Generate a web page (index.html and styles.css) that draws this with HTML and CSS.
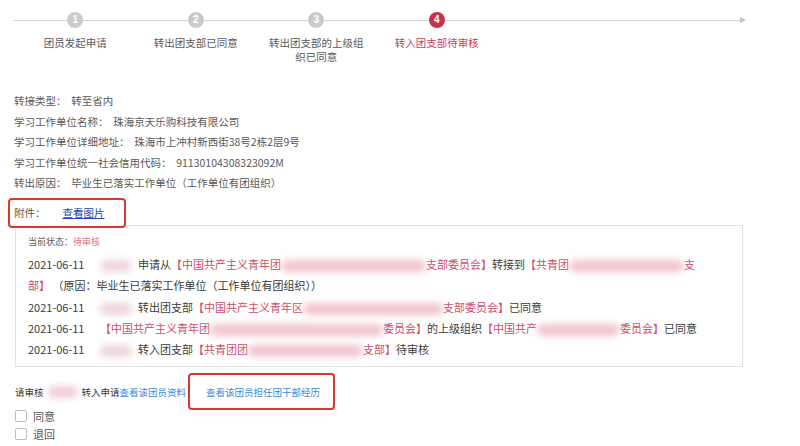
FILE: index.html
```html
<!DOCTYPE html>
<html lang="zh-CN">
<head>
    <meta charset="UTF-8">
    <meta name="viewport" content="width=device-width, initial-scale=1.0">
    <title>转接审核</title>
    <link rel="stylesheet" href="styles.css">
</head>
<body>
    <div class="steps">
        <div class="step"><span class="dot">1</span><span class="label">团员发起申请</span></div>
        <div class="step"><span class="dot">2</span><span class="label">转出团支部已同意</span></div>
        <div class="step"><span class="dot">3</span><span class="label">转出团支部的上级组织已同意</span></div>
        <div class="step current"><span class="dot">4</span><span class="label">转入团支部待审核</span></div>
    </div>

    <div class="info">
        <p>转接类型：&nbsp; 转至省内</p>
        <p>学习工作单位名称：&nbsp; 珠海京天乐购科技有限公司</p>
        <p>学习工作单位详细地址：&nbsp; 珠海市上冲村新西街38号2栋2层9号</p>
        <p>学习工作单位统一社会信用代码：&nbsp; 91130104308323092M</p>
        <p>转出原因：&nbsp; 毕业生已落实工作单位（工作单位有团组织）</p>
    </div>

    <div class="attach">附件：<a href="#">查看图片</a></div>

    <div class="record">
        <div class="state">当前状态：<span class="red">待审核</span></div>
        <div class="row">
            <span class="date">2021-06-11</span><span class="blur name"></span>申请从<span class="red">【中国共产主义青年团</span><span class="blur w145"></span><span class="red">支部委员会】</span>转接到<span class="red">【共青团</span><span class="blur w115"></span><span class="red">支<br>部】</span>&nbsp;（原因：毕业生已落实工作单位（工作单位有团组织））
        </div>
        <div class="row">
            <span class="date">2021-06-11</span><span class="blur name"></span>转出团支部<span class="red">【中国共产主义青年区</span><span class="blur w140"></span><span class="red">支部委员会】</span>已同意
        </div>
        <div class="row">
            <span class="date">2021-06-11</span><span class="red">【中国共产主义青年团</span><span class="blur w173"></span><span class="red">委员会】</span>的上级组织<span class="red">【中国共产</span><span class="blur w83"></span><span class="red">委员会】</span>已同意
        </div>
        <div class="row">
            <span class="date">2021-06-11</span><span class="blur name"></span>转入团支部<span class="red">【共青团团</span><span class="blur w115"></span><span class="red">支部】</span>待审核
        </div>
    </div>

    <div class="review">
        请审核<span class="blur small"></span>转入申请<a href="#">查看该团员资料</a>
        <div class="mark"><a href="#">查看该团员担任团干部经历</a></div>
    </div>

    <label class="check"><span class="box"></span>同意</label>
    <label class="check"><span class="box"></span>退回</label>
</body>
</html>
```

FILE: styles.css
```css
body {
    margin: 0;
    font-family: "Noto Sans CJK SC", "Noto Sans", sans-serif;
    color: #333;
    background-color: #fff;
}
.steps {
    position: relative;
    display: flex;
    align-items: flex-start;
    box-sizing: border-box;
    height: 91px;
    padding: 12px 0 0 15px;
}
.steps::before {
    content: "";
    position: absolute;
    left: 14px;
    top: 20px;
    width: 728px;
    height: 1px;
    background-color: #d2d2d2;
}
.steps::after {
    content: "";
    position: absolute;
    left: 740px;
    top: 17px;
    border-left: 6px solid #c2c2c2;
    border-top: 3.5px solid transparent;
    border-bottom: 3.5px solid transparent;
}
.step {
    width: 120.5px;
    display: flex;
    flex-direction: column;
    align-items: center;
}
.dot {
    position: relative;
    z-index: 1;
    width: 16px;
    height: 16px;
    border-radius: 50%;
    background-color: #cbcbcb;
    color: #fff;
    font-family: "Liberation Sans", sans-serif;
    font-size: 10px;
    font-weight: bold;
    line-height: 16px;
    text-align: center;
}
.label {
    margin-top: 8px;
    max-width: 100px;
    font-size: 10.5px;
    line-height: 14px;
    text-align: center;
    color: #595959;
}
.current .dot {
    background-color: #c9324b;
}
.current .label {
    color: #c8425c;
}
.info {
    padding-left: 14px;
    font-size: 10.5px;
    line-height: 20.5px;
    color: #595959;
}
.info p {
    margin: 0;
}
.attach {
    position: relative;
    z-index: 1;
    display: flex;
    align-items: center;
    box-sizing: border-box;
    width: 118px;
    height: 30px;
    margin: 4px 0 0 8px;
    padding-left: 4px;
    border: 2px solid #e0352c;
    border-radius: 4px;
    background-color: #fff;
    font-size: 10.5px;
    color: #595959;
}
.attach a {
    margin-left: 17px;
    color: #2447b3;
}
.record {
    box-sizing: border-box;
    width: 728px;
    margin: -3px 0 0 15px;
    padding: 9px 0 6px 12px;
    border: 1px solid #e3e3e3;
}
.state {
    margin-bottom: 5.5px;
    font-size: 9px;
    line-height: 14px;
    color: #595959;
}
.row {
    font-size: 11px;
    line-height: 21.25px;
    color: #3a3a3a;
}
.date {
    display: inline-block;
    width: 72px;
}
.red {
    color: #d04c68;
}
.state .red {
    color: #dc7088;
}
.blur {
    display: inline-block;
    height: 12px;
    vertical-align: middle;
    border-radius: 6px;
    background-color: #f2c4cf;
    filter: blur(3.5px);
}
.blur.name {
    width: 32px;
    margin-right: 6px;
    background-color: #ecd6db;
}
.w83 { width: 83px; }
.w115 { width: 115px; }
.w140 { width: 140px; }
.w145 { width: 145px; }
.w173 { width: 173px; }
.review {
    display: flex;
    align-items: center;
    margin: 6px 0 -4px 15px;
    font-size: 9.5px;
    color: #3a3a3a;
}
.review a {
    color: #3d8ad6;
    text-decoration: none;
}
.blur.small {
    width: 30px;
    margin: 0 4px;
    background-color: #f0d0d8;
}
.mark {
    display: flex;
    align-items: center;
    box-sizing: border-box;
    height: 37px;
    margin-left: 2px;
    padding: 0 13px 0 16px;
    border: 2px solid #e0352c;
    border-radius: 4px;
}
.check {
    display: flex;
    align-items: center;
    height: 18.5px;
    padding-left: 15px;
    font-size: 11px;
    color: #595959;
}
.box {
    box-sizing: border-box;
    width: 12px;
    height: 12px;
    margin-right: 6px;
    border: 1px solid #bbb;
    border-radius: 2px;
}
```
